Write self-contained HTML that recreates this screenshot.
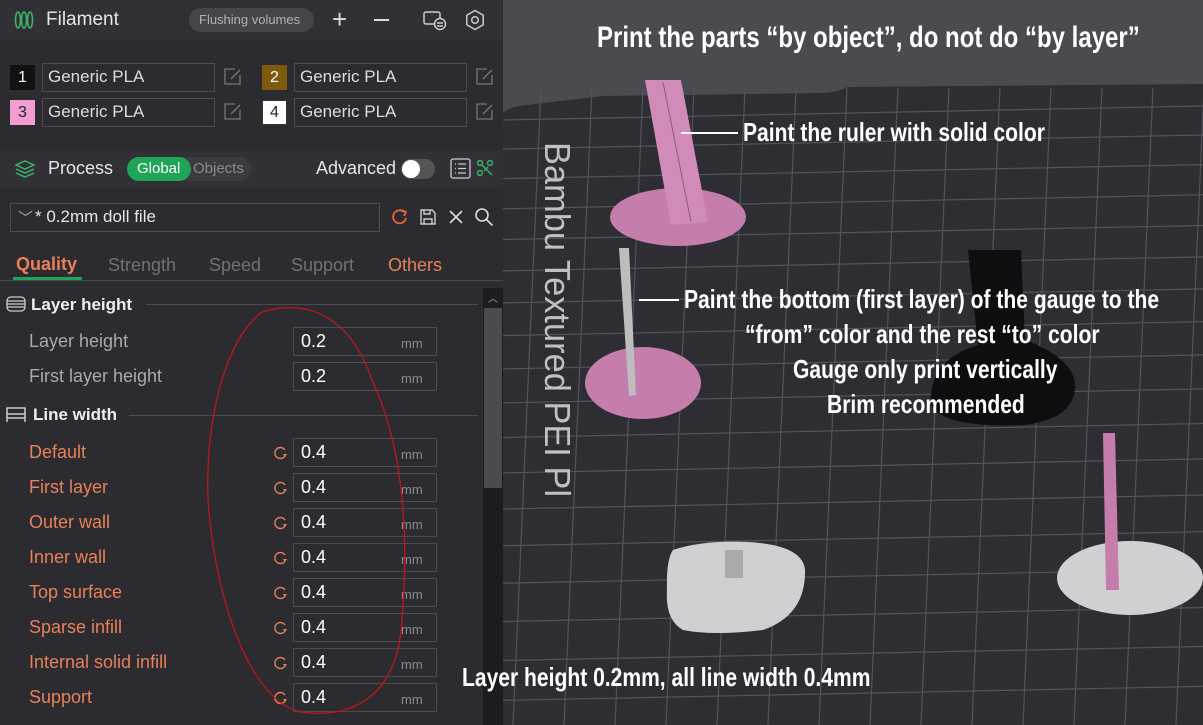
<!DOCTYPE html>
<html><head><meta charset="utf-8"><style>
*{margin:0;padding:0;box-sizing:border-box}
body{width:1203px;height:725px;overflow:hidden;background:#2b2b30;font-family:"Liberation Sans",sans-serif;position:relative}
.p{position:absolute}
.left{left:0;top:0;width:503px;height:725px;background:#2b2b30}
.t{position:absolute;white-space:nowrap}
.box{position:absolute;border:1px solid #4a4a50;background:#2b2b30}
.ann{position:absolute;color:#fff;font-family:"Liberation Sans Narrow","Liberation Sans",sans-serif;font-weight:bold;white-space:nowrap;transform-origin:left top;transform:scaleX(0.81);font-size:26px}
.lbl{color:#e8805a;font-size:18px}
.mm{color:#8a8a90;font-size:13px}
</style></head><body>
<div class="p left">
 <div class="p" style="left:0;top:0;width:503px;height:40px;background:#303036"></div>
 <svg class="p" style="left:14px;top:10px" width="20" height="20"><g fill="none" stroke="#3cb36a" stroke-width="1.6"><ellipse cx="4" cy="10" rx="2.5" ry="8"/><ellipse cx="10" cy="10" rx="2.5" ry="8"/><ellipse cx="16" cy="10" rx="2.5" ry="8"/></g></svg>
 <div class="t" style="left:46px;top:9px;color:#e6e6e6;font-size:19px">Filament</div>
 <div class="p" style="left:189px;top:8px;width:125px;height:24px;border-radius:12px;background:#45454b"></div>
 <div class="t" style="left:199px;top:12px;color:#b0b0b6;font-size:13px">Flushing volumes</div>
 <div class="t" style="left:332px;top:4px;color:#ddd;font-size:26px">+</div>
 <div class="p" style="left:374px;top:19px;width:15px;height:2px;background:#ddd"></div>
 <svg class="p" style="left:423px;top:9px" width="24" height="22"><g fill="none" stroke="#ccc" stroke-width="1.5"><rect x="1" y="3" width="16" height="12" rx="2"/><circle cx="17" cy="15" r="5.5" fill="#303036"/><path d="M14 14h6M14 17h6"/></g></svg>
 <svg class="p" style="left:464px;top:9px" width="22" height="22"><g fill="none" stroke="#ccc" stroke-width="1.5"><path d="M11 1.5l8.2 4.75v9.5L11 20.5l-8.2-4.75v-9.5z"/><circle cx="11" cy="11" r="3.3"/></g></svg>

 <div class="p" style="left:10px;top:65px;width:25px;height:25px;background:#111;color:#fff;font-size:16px;text-align:center;line-height:25px">1</div>
 <div class="box" style="left:42px;top:63px;width:173px;height:29px"></div>
 <div class="t" style="left:48px;top:67px;color:#ddd;font-size:17px">Generic PLA</div>
 <div class="p" style="left:262px;top:65px;width:25px;height:25px;background:#7d5a0e;color:#fff;font-size:16px;text-align:center;line-height:25px">2</div>
 <div class="box" style="left:294px;top:63px;width:173px;height:29px"></div>
 <div class="t" style="left:300px;top:67px;color:#ddd;font-size:17px">Generic PLA</div>
 <div class="p" style="left:10px;top:100px;width:25px;height:25px;background:#f29ed2;color:#222;font-size:16px;text-align:center;line-height:25px">3</div>
 <div class="box" style="left:42px;top:98px;width:173px;height:29px"></div>
 <div class="t" style="left:48px;top:102px;color:#ddd;font-size:17px">Generic PLA</div>
 <div class="p" style="left:262px;top:100px;width:25px;height:25px;background:#fff;border:1px solid #333;color:#222;font-size:16px;text-align:center;line-height:23px">4</div>
 <div class="box" style="left:294px;top:98px;width:173px;height:29px"></div>
 <div class="t" style="left:300px;top:102px;color:#ddd;font-size:17px">Generic PLA</div>
 <svg class="p" style="left:222px;top:67px" width="20" height="20"><path d="M13 2H3v15h15V8M9 12l9-9" fill="none" stroke="#777" stroke-width="1.3"/></svg>
 <svg class="p" style="left:474px;top:67px" width="20" height="20"><path d="M13 2H3v15h15V8M9 12l9-9" fill="none" stroke="#777" stroke-width="1.3"/></svg>
 <svg class="p" style="left:222px;top:102px" width="20" height="20"><path d="M13 2H3v15h15V8M9 12l9-9" fill="none" stroke="#777" stroke-width="1.3"/></svg>
 <svg class="p" style="left:474px;top:102px" width="20" height="20"><path d="M13 2H3v15h15V8M9 12l9-9" fill="none" stroke="#777" stroke-width="1.3"/></svg>

 <div class="p" style="left:0;top:151px;width:503px;height:37px;background:#303036"></div>
 <svg class="p" style="left:14px;top:159px" width="22" height="20"><g fill="none" stroke="#3cb36a" stroke-width="1.5"><path d="M2 6l9-4 9 4-9 4z"/><path d="M2 10l9 4 9-4M2 14l9 4 9-4"/></g></svg>
 <div class="t" style="left:48px;top:158px;color:#e6e6e6;font-size:18px">Process</div>
 <div class="p" style="left:127px;top:157px;width:124px;height:24px;border-radius:12px;background:#3a3a40"></div>
 <div class="p" style="left:127px;top:157px;width:64px;height:24px;border-radius:12px;background:#1fa556"></div>
 <div class="t" style="left:137px;top:160px;color:#fff;font-size:15px">Global</div>
 <div class="t" style="left:193px;top:160px;color:#8a8a90;font-size:15px">Objects</div>
 <div class="t" style="left:316px;top:158px;color:#e6e6e6;font-size:18px">Advanced</div>
 <div class="p" style="left:401px;top:159px;width:34px;height:20px;border-radius:10px;background:#555"></div>
 <div class="p" style="left:402px;top:160px;width:18px;height:18px;border-radius:9px;background:#fff"></div>
 <svg class="p" style="left:450px;top:158px" width="21" height="21"><g fill="none" stroke="#ccc" stroke-width="1.3"><rect x="1" y="1" width="19" height="19" rx="2"/><path d="M5 6h1M8 6h8M5 10.5h1M8 10.5h8M5 15h1M8 15h8"/></g></svg>
 <svg class="p" style="left:476px;top:159px" width="18" height="18"><g fill="none" stroke="#3cb36a" stroke-width="1.4"><circle cx="4" cy="4" r="2.5"/><circle cx="14" cy="4" r="2.5"/><circle cx="4" cy="14" r="2.5"/><path d="M6 6l10 10M12 8l-4 4"/></g></svg>

 <div class="box" style="left:10px;top:203px;width:370px;height:29px;background:#2b2b30"></div>
 <div class="t" style="left:18px;top:207px;color:#aaa;font-size:15px">﹀</div>
 <div class="t" style="left:35px;top:207px;color:#e6e6e6;font-size:17px">* 0.2mm doll file</div>
 <svg class="p" style="left:390px;top:207px" width="20" height="20"><path d="M16 11a6.5 6.5 0 1 1-2-6" fill="none" stroke="#e8643a" stroke-width="1.8"/><path d="M12 3l4 2-2 4" fill="none" stroke="#e8643a" stroke-width="1.8"/></svg>
 <svg class="p" style="left:419px;top:208px" width="18" height="18"><g fill="none" stroke="#ccc" stroke-width="1.4"><path d="M2 2h11l3 3v11H2z"/><path d="M5 2v4h6V2M5 16v-5h8v5"/></g></svg>
 <svg class="p" style="left:448px;top:209px" width="16" height="16"><path d="M2 2l12 12M14 2L2 14" stroke="#ddd" stroke-width="1.6"/></svg>
 <svg class="p" style="left:474px;top:207px" width="20" height="20"><g fill="none" stroke="#ddd" stroke-width="1.6"><circle cx="8" cy="8" r="6"/><path d="M12.5 12.5l6 6"/></g></svg>

 <div class="t" style="left:16px;top:254px;color:#e8805a;font-size:18px;font-weight:bold">Quality</div>
 <div class="p" style="left:13px;top:277px;width:69px;height:3px;background:#1fa556"></div>
 <div class="t" style="left:108px;top:255px;color:#707076;font-size:18px">Strength</div>
 <div class="t" style="left:209px;top:255px;color:#707076;font-size:18px">Speed</div>
 <div class="t" style="left:291px;top:255px;color:#707076;font-size:18px">Support</div>
 <div class="t" style="left:388px;top:255px;color:#e8805a;font-size:18px">Others</div>
 <div class="p" style="left:0;top:280px;width:503px;height:1px;background:#48484e"></div>

 <div class="p" style="left:483px;top:288px;width:20px;height:437px;background:#1c1c20"></div>
 <div class="p" style="left:484px;top:308px;width:18px;height:180px;background:#4a4a50"></div>
 <div class="t" style="left:488px;top:290px;color:#aaa;font-size:10px">︿</div>

 <svg class="p" style="left:6px;top:295px" width="20" height="18"><g fill="none" stroke="#ccc" stroke-width="1.3"><rect x="1" y="2" width="18" height="14" rx="4"/><path d="M1 6h18M1 9h18M1 12h18"/></g></svg>
 <div class="t" style="left:31px;top:295px;color:#eee;font-size:17px;font-weight:bold">Layer height</div>
 <div class="p" style="left:146px;top:304px;width:332px;height:1px;background:#4a4a50"></div>
 <div class="t" style="left:29px;top:331px;color:#aaa;font-size:18px">Layer height</div>
 <div class="t" style="left:29px;top:366px;color:#aaa;font-size:18px">First layer height</div>
 <svg class="p" style="left:6px;top:407px" width="20" height="16"><g fill="none" stroke="#ccc" stroke-width="1.5"><rect x="1" y="1" width="18" height="6"/><path d="M1 7v8M19 7v8M1 11h18"/></g></svg>
 <div class="t" style="left:33px;top:405px;color:#eee;font-size:17px;font-weight:bold">Line width</div>
 <div class="p" style="left:129px;top:415px;width:349px;height:1px;background:#4a4a50"></div>

 <div class="box" style="left:293px;top:327px;width:144px;height:29px"></div><div class="t" style="left:301px;top:331px;color:#fff;font-size:18px">0.2</div><div class="t mm" style="left:401px;top:336px">mm</div>
 <div class="box" style="left:293px;top:362px;width:144px;height:29px"></div><div class="t" style="left:301px;top:366px;color:#fff;font-size:18px">0.2</div><div class="t mm" style="left:401px;top:371px">mm</div>

 <div class="t lbl" style="left:29px;top:442px">Default</div>
 <div class="t lbl" style="left:29px;top:477px">First layer</div>
 <div class="t lbl" style="left:29px;top:512px">Outer wall</div>
 <div class="t lbl" style="left:29px;top:547px">Inner wall</div>
 <div class="t lbl" style="left:29px;top:582px">Top surface</div>
 <div class="t lbl" style="left:29px;top:617px">Sparse infill</div>
 <div class="t lbl" style="left:29px;top:652px">Internal solid infill</div>
 <div class="t lbl" style="left:29px;top:687px">Support</div>
</div>
<div id="rows"></div>
<svg class="p" style="left:0;top:0" width="503" height="725"><path d="M262 312 C 320 295, 355 330, 372 380 C 400 440, 410 520, 402 620 C 398 690, 360 720, 300 712 C 250 700, 215 600, 208 500 C 205 420, 225 340, 262 312" fill="none" stroke="#c0161c" stroke-width="1.3"/></svg>

<svg id="vp" class="p" style="left:503px;top:0" width="700" height="725">
 <rect width="700" height="725" fill="#4a4a51"/>
 <path d="M0 113 Q2 110 15 106 L100 96 L320 93 Q335 92 345 87 L700 84 L700 725 L0 725z" fill="#2e2d33"/>
 <g id="grid" stroke="#54535b" stroke-width="1.2" fill="none"></g>
 <text x="42" y="142" transform="rotate(90 42 142)" fill="#c0c0c4" font-family="Liberation Sans Narrow, Liberation Sans, sans-serif" font-size="36" textLength="355" lengthAdjust="spacingAndGlyphs">Bambu Textured PEI Pl</text>
 <ellipse cx="175" cy="217" rx="68" ry="29" fill="#c57dac"/>
 <path d="M142 80L178 80L205 222L168 225Z" fill="#d08bb8"/><path d="M160 82L188 222" stroke="#8a5a78"/>
 <ellipse cx="140" cy="383" rx="58" ry="36" fill="#c57dac"/>
 <path d="M116 248L126 248L133 395L126 396Z" fill="#bdbdbd"/>
 <path d="M465 250L518 250L522 340Q575 360 572 390Q568 420 520 425Q440 428 428 405Q425 360 475 345Z" fill="#0e0e10"/>
 <path d="M170 550Q200 540 245 542Q300 545 302 570Q303 615 260 630Q210 636 180 630Q162 620 164 590Q163 560 170 550Z" fill="#d0d0d2"/>
 <rect x="222" y="550" width="18" height="28" fill="#aaa"/>
 <ellipse cx="627" cy="578" rx="73" ry="37" fill="#d0d0d2"/>
 <path d="M600 433L612 433L616 590L603 590Z" fill="#c57dac"/>
</svg>
<script>
var h='';for(var i=0;i<8;i++){var y=438+i*35;
h+='<svg class="p" style="left:272px;top:'+(y+6)+'px" width="18" height="18"><path d="M13 12a5.5 5.5 0 1 1 0-6" fill="none" stroke="#e8805a" stroke-width="1.4"/><path d="M15 10l-2 3-2-3z" fill="#e8805a"/></svg>';
h+='<div class="box" style="left:293px;top:'+y+'px;width:144px;height:29px"></div><div class="t" style="left:301px;top:'+(y+4)+'px;color:#fff;font-size:18px">0.4</div><div class="t mm" style="left:401px;top:'+(y+9)+'px">mm</div>';}
document.getElementById('rows').innerHTML=h;
var g='';
for(var k=-2;k<16;k++){var xb=k*51+10;var xt=xb+28; g+='<path d="M'+xb+' 725L'+xt+' 88"/>';}
for(var y=120;y<740;y+=29+(y-120)*0.02){g+='<path d="M0 '+y.toFixed(1)+'L700 '+(y-14).toFixed(1)+'"/>';}
document.getElementById('grid').innerHTML=g;
</script>
<div class="ann" style="left:597px;top:21px;font-size:30px;transform:scaleX(0.8)">Print the parts “by object”, do not do “by layer”</div>
<div class="p" style="left:681px;top:132px;width:57px;height:2px;background:#fff"></div>
<div class="ann" style="left:743px;top:117px">Paint the ruler with solid color</div>
<div class="p" style="left:639px;top:299px;width:40px;height:2px;background:#fff"></div>
<div class="ann" style="left:684px;top:284px">Paint the bottom (first layer) of the gauge to the</div>
<div class="ann" style="left:745px;top:319px">“from” color and the rest “to” color</div>
<div class="ann" style="left:793px;top:354px">Gauge only print vertically</div>
<div class="ann" style="left:827px;top:389px">Brim recommended</div>
<div class="ann" style="left:462px;top:662px">Layer height 0.2mm, all line width 0.4mm</div>
</body></html>
